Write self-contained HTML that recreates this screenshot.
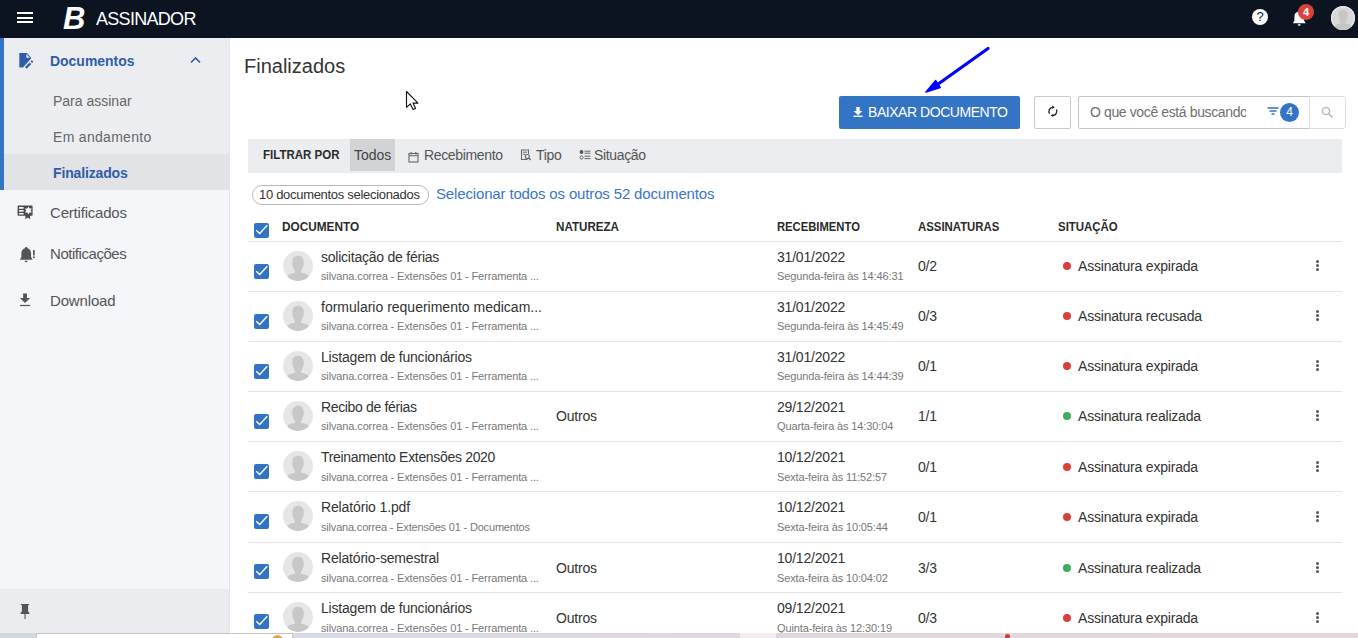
<!DOCTYPE html>
<html><head><meta charset="utf-8">
<style>
*{margin:0;padding:0;box-sizing:border-box}
html,body{width:1358px;height:638px;overflow:hidden;background:#fff;font-family:"Liberation Sans",sans-serif;color:#333}
.a{position:absolute;white-space:nowrap}
#hdr{position:absolute;left:0;top:0;width:1358px;height:38px;background:#0b1420}
#side{position:absolute;left:0;top:38px;width:230px;height:600px;background:#f5f6fa;border-right:1px solid #e3e5ea}
#docsec{position:absolute;left:0;top:0;width:229px;height:152px;background:#ecedf1;border-left:4px solid #3474c4}
#finsel{position:absolute;left:0;top:116px;width:225px;height:36px;background:#e1e3e7}
#pinsec{position:absolute;left:0;top:551px;width:229px;height:44px;background:#ebecf0}
.filt{position:absolute;left:248px;top:139px;width:1094px;height:34px;background:#ebedf0}
.hl{position:absolute;height:1px;background:#e3e4e8;left:248px;width:1094px}
.cb{position:absolute;width:15px;height:15px;background:#3373c4;border-radius:2px}
.cb svg{position:absolute;left:0;top:0}
.av{position:absolute;width:30px;height:30px;border-radius:50%;background:#e6e6e6;overflow:hidden}
.t1{font-size:14px;color:#333;letter-spacing:-0.2px}
.t2{font-size:11px;color:#777;letter-spacing:-0.13px}
.dot{position:absolute;width:8px;height:8px;border-radius:50%}
.red{background:#d9403a}.grn{background:#3fae5a}
.keb{position:absolute;width:3px}
.keb i{display:block;width:3px;height:3px;border-radius:50%;background:#555;margin-bottom:1px}
</style></head><body>
<div id="hdr">
  <div class="a" style="left:17px;top:12px;width:16px;height:2px;background:#fff"></div>
  <div class="a" style="left:17px;top:16.5px;width:16px;height:2px;background:#fff"></div>
  <div class="a" style="left:17px;top:21px;width:16px;height:2px;background:#fff"></div>
  <div class="a" style="left:63px;top:1px;font-size:31px;font-weight:bold;font-style:italic;color:#fff">B</div>
  <div class="a" style="left:96px;top:9px;font-size:18px;letter-spacing:-0.7px;color:#fff">ASSINADOR</div>
  <div class="a" style="left:1252px;top:9px;width:16px;height:16px;border-radius:50%;background:#fff;color:#0b1420;font-size:13px;text-align:center;line-height:16px">?</div>
  <svg class="a" style="left:1292px;top:9px" width="16" height="18" viewBox="0 0 16 18"><path d="M7.2 1.2C6.5 1.2 6.2 2 5.8 2.7C3.5 3.3 2.4 5.2 2.4 7.7V11.5L0.9 14.3H13.6L12.1 11.5V7.7C12.1 5.2 11 3.3 8.6 2.7C8.2 2 7.9 1.2 7.2 1.2z" fill="#fff"/><path d="M5.7 15.2H8.7A1.5 1.5 0 0 1 5.7 15.2z" fill="#fff"/></svg>
  <div class="a" style="left:1298px;top:4px;width:16px;height:16px;border-radius:50%;background:#d9433b;color:#fff;font-size:11px;font-weight:bold;text-align:center;line-height:16px">4</div>
  <div class="a" style="left:1331px;top:6px;width:24px;height:24px;border-radius:50%;background:#d8d8d8;box-shadow:inset 0 0 0 1.2px #e9e9e9;overflow:hidden"><svg width="24" height="24" viewBox="0 0 30 30" style="position:absolute;left:0;top:0"><path d="M15 4.8C11.3 4.8 9.2 7.5 9.2 11C9.2 13 9.5 15 10.2 16.5C10.8 18 11.5 19.3 12 20.5L12 21.8C9 22.3 6.2 23.2 4.5 24.5L4 30L26 30L25.5 24.5C23.8 23.2 21 22.3 18 21.8L18 20.5C18.5 19.3 19.2 18 19.8 16.5C20.5 15 20.8 13 20.8 11C20.8 7.5 18.7 4.8 15 4.8Z" fill="#c6c6c6"/></svg></div>
</div>

<div id="side">
  <div id="docsec">
    <div id="finsel"></div>
  </div>
  <div id="pinsec"></div>
</div>
<!-- sidebar content (page coords) -->
<svg class="a" style="left:18px;top:52px" width="17" height="17" viewBox="0 0 17 17"><path d="M1.3 0.9H8.8L13 5.5V6.5L5 15.6H1.3z" fill="#2f5da6"/><path d="M8.4 1.9V5.8H12z" fill="#ecedf1"/><path d="M7.9 15.9L12.4 11.2" stroke="#2f5da6" stroke-width="2.3"/><path d="M13.3 10.3L14.6 9" stroke="#2f5da6" stroke-width="2.3"/></svg>
<div class="a" style="left:50px;top:52px;font-size:15px;font-weight:bold;transform:scaleX(0.93);transform-origin:0 0;color:#2f5da6">Documentos</div>
<svg class="a" style="left:190px;top:56px" width="11" height="8" viewBox="0 0 11 8"><path d="M1 6.5L5.5 2 10 6.5" stroke="#2f5da6" stroke-width="1.6" fill="none"/></svg>
<div class="a" style="left:53px;top:93px;font-size:14px;color:#666">Para assinar</div>
<div class="a" style="left:53px;top:129px;font-size:14px;letter-spacing:0.3px;color:#666">Em andamento</div>
<div class="a" style="left:53px;top:165px;font-size:14px;font-weight:bold;letter-spacing:-0.15px;color:#2f5da6">Finalizados</div>
<svg class="a" style="left:17px;top:205px" width="16" height="15" viewBox="0 0 16 15"><rect x="0.6" y="0.6" width="15" height="10.2" rx="0.8" fill="#4a4a4a"/><path d="M2 2h4.6v1.7H2zM2 5h4.6v1.7H2zM2 7.9h4.6v1.7H2z" fill="#f5f6fa"/><path d="M11.40 1.40 L10.25 3.41 L7.94 3.40 L9.10 5.40 L7.94 7.40 L10.25 7.39 L11.40 9.40 L12.55 7.39 L14.86 7.40 L13.70 5.40 L14.86 3.40 L12.55 3.41z" fill="#f5f6fa"/><path d="M8.6 9.5L8.2 14.2 10.7 12.6 13.2 14.2 12.8 9.5z" fill="#4a4a4a"/></svg>
<div class="a" style="left:50px;top:204px;font-size:15px;letter-spacing:-0.2px;color:#555">Certificados</div>
<svg class="a" style="left:19px;top:246px" width="17" height="18" viewBox="0 0 17 18"><path d="M7.2 0.7C6.5 0.7 6.2 1.5 5.8 2.2C3.8 2.8 2.4 4.7 2.4 7.2V11L0.9 13.8H13.6L12.1 11V7.2C12.1 4.7 10.7 2.8 8.6 2.2C8.2 1.5 7.9 0.7 7.2 0.7z" fill="#555"/><path d="M5.7 14.8H8.7A1.5 1.5 0 0 1 5.7 14.8z" fill="#555"/><rect x="14" y="4" width="1.7" height="5.5" fill="#555"/><rect x="14" y="10.4" width="1.7" height="1.7" fill="#555"/></svg>
<div class="a" style="left:50px;top:245px;font-size:15px;letter-spacing:-0.45px;color:#555">Notificações</div>
<svg class="a" style="left:19px;top:293px" width="12" height="14" viewBox="0 0 12 14"><path d="M4.1 0.6H8V5H11.1L6 9.9 0.9 5H4.1z" fill="#555"/><path d="M0.9 12.5H11.2" stroke="#555" stroke-width="1.2"/></svg>
<div class="a" style="left:50px;top:292px;font-size:15px;letter-spacing:-0.15px;color:#555">Download</div>
<svg class="a" style="left:20px;top:603px" width="10" height="16" viewBox="0 0 10 16"><path d="M0.8 0.9H9.1V2.1H8.1V8.6L9.4 9.8V10.9H0.6V9.8L1.9 8.6V2.1H0.8z" fill="#555"/><path d="M5 10.9V15.9" stroke="#555" stroke-width="1.1"/></svg>

<!-- main -->
<div class="a" style="left:244px;top:55px;font-size:20px;color:#333">Finalizados</div>
<svg class="a" style="left:400px;top:85px" width="24" height="30" viewBox="0 0 24 30"><path d="M6.5 6.5V22.3L10.3 18.9 13.1 24.6 15.6 23.5 13 18.1H18z" fill="#fff" stroke="#111" stroke-width="1.1" stroke-linejoin="round"/></svg>
<svg class="a" style="left:900px;top:40px" width="100" height="60" viewBox="0 0 100 60"><path d="M88 8.5L34 47" stroke="#0000ff" stroke-width="3.2" stroke-linecap="round"/><path d="M26 52L35.7 40.6 40.2 47.5z" fill="#0000ff" stroke="#0000ff" stroke-width="1.5" stroke-linejoin="round"/></svg>
<div class="a" style="left:839px;top:96px;width:181px;height:33px;background:#3474c4;border-radius:2px"></div>
<svg class="a" style="left:853px;top:107px" width="10" height="10" viewBox="0 0 10 10"><path d="M3.3 0h3.4v4h2.6L5 8.2.7 4h2.6z" fill="#fff"/><path d="M.5 9.3h9" stroke="#fff" stroke-width="1.4"/></svg>
<div class="a" style="left:868px;top:104px;font-size:14px;letter-spacing:-0.45px;color:#fff">BAIXAR DOCUMENTO</div>
<div class="a" style="left:1034px;top:96px;width:37px;height:33px;border:1px solid #c9cbd0;border-radius:2px;background:#fff"></div>
<svg class="a" style="left:1046px;top:105px" width="14" height="14" viewBox="0 0 14 14"><path d="M6.6 2.3A4.1 4.1 0 0 0 3.6 8.6" stroke="#222" stroke-width="1.3" fill="none"/><path d="M10.4 4.6A4.1 4.1 0 0 1 7.2 10.4" stroke="#222" stroke-width="1.3" fill="none"/><path d="M6.2 0.6L8.9 2.3 6.2 4z" fill="#222"/><path d="M7.4 8.7L4.7 10.4 7.4 12.1z" fill="#222"/></svg>
<div class="a" style="left:1078px;top:96px;width:232px;height:33px;border:1px solid #c2c4c8;border-radius:2px 0 0 2px;background:#fff"></div>
<div class="a" style="left:1090px;top:104px;width:156px;overflow:hidden;font-size:14px;letter-spacing:-0.38px;color:#6f6f6f">O que você está buscando?</div>
<svg class="a" style="left:1267px;top:107px" width="12" height="9" viewBox="0 0 12 9"><path d="M0.5 1h11M2.5 4h7M4.5 7h3" stroke="#3474c4" stroke-width="1.4"/></svg>
<div class="a" style="left:1280px;top:103px;width:19px;height:19px;border-radius:50%;background:#3474c4;color:#fff;font-size:12px;text-align:center;line-height:19px">4</div>
<div class="a" style="left:1309px;top:96px;width:37px;height:33px;border:1px solid #dcdee2;border-radius:0 3px 3px 0;background:#fff"></div>
<svg class="a" style="left:1321px;top:106px" width="13" height="13" viewBox="0 0 13 13"><circle cx="5" cy="5" r="3.6" stroke="#bbb" stroke-width="1.5" fill="none"/><path d="M7.8 7.8l3.6 3.6" stroke="#bbb" stroke-width="1.8"/></svg>

<div class="filt"></div>
<div class="a" style="left:350px;top:139px;width:45px;height:32px;background:#d2d3d6"></div>
<div class="a" style="left:263px;top:147px;font-size:13px;font-weight:bold;transform:scaleX(0.885);transform-origin:0 0;color:#2b2b2b">FILTRAR POR</div>
<div class="a" style="left:354px;top:147px;font-size:14px;color:#444">Todos</div>
<svg class="a" style="left:408px;top:151px" width="11" height="12" viewBox="0 0 11 12"><rect x="1" y="2.5" width="9" height="8.5" stroke="#666" stroke-width="1.1" fill="none"/><path d="M1 4.8h9M3.2 1v2.5M7.8 1v2.5" stroke="#666" stroke-width="1.1"/></svg>
<div class="a" style="left:424px;top:147px;font-size:14px;letter-spacing:-0.35px;color:#555">Recebimento</div>
<svg class="a" style="left:520px;top:149px" width="12" height="12" viewBox="0 0 12 12"><path d="M7.5 10.5H1.5V1h7v4" stroke="#666" stroke-width="1.1" fill="none"/><path d="M3 3.2h4M3 5.3h2.5" stroke="#666" stroke-width="1"/><circle cx="7.3" cy="7.5" r="2" stroke="#666" stroke-width="1.1" fill="none"/><path d="M8.7 9l2 2" stroke="#666" stroke-width="1.2"/></svg>
<div class="a" style="left:536px;top:147px;font-size:14px;letter-spacing:-0.35px;color:#555">Tipo</div>
<svg class="a" style="left:579px;top:149px" width="12" height="12" viewBox="0 0 12 12"><circle cx="2.5" cy="3" r="1.9" fill="#555"/><circle cx="2.5" cy="8.5" r="1.6" stroke="#666" stroke-width="1" fill="none"/><path d="M5.5 2.2h6M5.5 4.2h6M5.5 7.2h6M5.5 9.6h6" stroke="#666" stroke-width="1"/></svg>
<div class="a" style="left:594px;top:147px;font-size:14px;letter-spacing:-0.35px;color:#555">Situação</div>

<div class="a" style="left:252px;top:185px;width:177px;height:20px;border:1px solid #b8b8b8;border-radius:10px"></div>
<div class="a" style="left:259px;top:187px;font-size:13px;letter-spacing:-0.3px;color:#333">10 documentos selecionados</div>
<div class="a" style="left:436px;top:185px;font-size:15px;letter-spacing:-0.15px;color:#3a77c7">Selecionar todos os outros 52 documentos</div>

<div class="cb" style="left:254px;top:223px"><svg width="15" height="15" viewBox="0 0 15 15"><path d="M2.2 7.3l3.5 3.2 7.6-8.2" stroke="#fff" stroke-width="1.4" fill="none"/></svg></div>
<div class="a" style="left:282px;top:219px;font-size:13px;font-weight:bold;transform:scaleX(0.907);transform-origin:0 0;color:#2b2b2b">DOCUMENTO</div>
<div class="a" style="left:556px;top:219px;font-size:13px;font-weight:bold;transform:scaleX(0.893);transform-origin:0 0;color:#2b2b2b">NATUREZA</div>
<div class="a" style="left:777px;top:219px;font-size:13px;font-weight:bold;transform:scaleX(0.865);transform-origin:0 0;color:#2b2b2b">RECEBIMENTO</div>
<div class="a" style="left:918px;top:219px;font-size:13px;font-weight:bold;transform:scaleX(0.875);transform-origin:0 0;color:#2b2b2b">ASSINATURAS</div>
<div class="a" style="left:1058px;top:219px;font-size:13px;font-weight:bold;transform:scaleX(0.880);transform-origin:0 0;color:#2b2b2b">SITUAÇÃO</div>
<div class="hl" style="top:241px"></div>
<div class="cb" style="left:254px;top:264px"><svg width="15" height="15" viewBox="0 0 15 15"><path d="M2.2 7.3l3.5 3.2 7.6-8.2" stroke="#fff" stroke-width="1.4" fill="none"/></svg></div>
<div class="av" style="left:283px;top:251px"><svg width="30" height="30" viewBox="0 0 30 30"><path d="M15 4.8C11.3 4.8 9.2 7.5 9.2 11C9.2 13 9.5 15 10.2 16.5C10.8 18 11.5 19.3 12 20.5L12 21.8C9 22.3 6.2 23.2 4.5 24.5L4 30L26 30L25.5 24.5C23.8 23.2 21 22.3 18 21.8L18 20.5C18.5 19.3 19.2 18 19.8 16.5C20.5 15 20.8 13 20.8 11C20.8 7.5 18.7 4.8 15 4.8Z" fill="#c8c8c8"/></svg></div>
<div class="a t1" style="left:321px;top:249px;letter-spacing:-0.23px">solicitação de férias</div>
<div class="a t2" style="left:321px;top:270px">silvana.correa - Extensões 01 - Ferramenta ...</div>

<div class="a t1" style="left:777px;top:249px">31/01/2022</div>
<div class="a t2" style="left:777px;top:270px">Segunda-feira às 14:46:31</div>
<div class="a t1" style="left:918px;top:258px">0/2</div>
<div class="dot red" style="left:1063px;top:262px"></div>
<div class="a t1" style="left:1078px;top:258px">Assinatura expirada</div>
<div class="keb" style="left:1316px;top:260px"><i></i><i></i><i></i></div>
<div class="hl" style="top:291px"></div>
<div class="cb" style="left:254px;top:314px"><svg width="15" height="15" viewBox="0 0 15 15"><path d="M2.2 7.3l3.5 3.2 7.6-8.2" stroke="#fff" stroke-width="1.4" fill="none"/></svg></div>
<div class="av" style="left:283px;top:301px"><svg width="30" height="30" viewBox="0 0 30 30"><path d="M15 4.8C11.3 4.8 9.2 7.5 9.2 11C9.2 13 9.5 15 10.2 16.5C10.8 18 11.5 19.3 12 20.5L12 21.8C9 22.3 6.2 23.2 4.5 24.5L4 30L26 30L25.5 24.5C23.8 23.2 21 22.3 18 21.8L18 20.5C18.5 19.3 19.2 18 19.8 16.5C20.5 15 20.8 13 20.8 11C20.8 7.5 18.7 4.8 15 4.8Z" fill="#c8c8c8"/></svg></div>
<div class="a t1" style="left:321px;top:299px;letter-spacing:0.0px">formulario requerimento medicam...</div>
<div class="a t2" style="left:321px;top:320px">silvana.correa - Extensões 01 - Ferramenta ...</div>

<div class="a t1" style="left:777px;top:299px">31/01/2022</div>
<div class="a t2" style="left:777px;top:320px">Segunda-feira às 14:45:49</div>
<div class="a t1" style="left:918px;top:308px">0/3</div>
<div class="dot red" style="left:1063px;top:312px"></div>
<div class="a t1" style="left:1078px;top:308px">Assinatura recusada</div>
<div class="keb" style="left:1316px;top:310px"><i></i><i></i><i></i></div>
<div class="hl" style="top:341px"></div>
<div class="cb" style="left:254px;top:364px"><svg width="15" height="15" viewBox="0 0 15 15"><path d="M2.2 7.3l3.5 3.2 7.6-8.2" stroke="#fff" stroke-width="1.4" fill="none"/></svg></div>
<div class="av" style="left:283px;top:351px"><svg width="30" height="30" viewBox="0 0 30 30"><path d="M15 4.8C11.3 4.8 9.2 7.5 9.2 11C9.2 13 9.5 15 10.2 16.5C10.8 18 11.5 19.3 12 20.5L12 21.8C9 22.3 6.2 23.2 4.5 24.5L4 30L26 30L25.5 24.5C23.8 23.2 21 22.3 18 21.8L18 20.5C18.5 19.3 19.2 18 19.8 16.5C20.5 15 20.8 13 20.8 11C20.8 7.5 18.7 4.8 15 4.8Z" fill="#c8c8c8"/></svg></div>
<div class="a t1" style="left:321px;top:349px;letter-spacing:-0.2px">Listagem de funcionários</div>
<div class="a t2" style="left:321px;top:370px">silvana.correa - Extensões 01 - Ferramenta ...</div>

<div class="a t1" style="left:777px;top:349px">31/01/2022</div>
<div class="a t2" style="left:777px;top:370px">Segunda-feira às 14:44:39</div>
<div class="a t1" style="left:918px;top:358px">0/1</div>
<div class="dot red" style="left:1063px;top:362px"></div>
<div class="a t1" style="left:1078px;top:358px">Assinatura expirada</div>
<div class="keb" style="left:1316px;top:360px"><i></i><i></i><i></i></div>
<div class="hl" style="top:391px"></div>
<div class="cb" style="left:254px;top:414px"><svg width="15" height="15" viewBox="0 0 15 15"><path d="M2.2 7.3l3.5 3.2 7.6-8.2" stroke="#fff" stroke-width="1.4" fill="none"/></svg></div>
<div class="av" style="left:283px;top:401px"><svg width="30" height="30" viewBox="0 0 30 30"><path d="M15 4.8C11.3 4.8 9.2 7.5 9.2 11C9.2 13 9.5 15 10.2 16.5C10.8 18 11.5 19.3 12 20.5L12 21.8C9 22.3 6.2 23.2 4.5 24.5L4 30L26 30L25.5 24.5C23.8 23.2 21 22.3 18 21.8L18 20.5C18.5 19.3 19.2 18 19.8 16.5C20.5 15 20.8 13 20.8 11C20.8 7.5 18.7 4.8 15 4.8Z" fill="#c8c8c8"/></svg></div>
<div class="a t1" style="left:321px;top:399px;letter-spacing:-0.35px">Recibo de férias</div>
<div class="a t2" style="left:321px;top:420px">silvana.correa - Extensões 01 - Ferramenta ...</div>
<div class="a t1" style="left:556px;top:408px">Outros</div>
<div class="a t1" style="left:777px;top:399px">29/12/2021</div>
<div class="a t2" style="left:777px;top:420px">Quarta-feira às 14:30:04</div>
<div class="a t1" style="left:918px;top:408px">1/1</div>
<div class="dot grn" style="left:1063px;top:412px"></div>
<div class="a t1" style="left:1078px;top:408px">Assinatura realizada</div>
<div class="keb" style="left:1316px;top:410px"><i></i><i></i><i></i></div>
<div class="hl" style="top:441px"></div>
<div class="cb" style="left:254px;top:464px"><svg width="15" height="15" viewBox="0 0 15 15"><path d="M2.2 7.3l3.5 3.2 7.6-8.2" stroke="#fff" stroke-width="1.4" fill="none"/></svg></div>
<div class="av" style="left:283px;top:451px"><svg width="30" height="30" viewBox="0 0 30 30"><path d="M15 4.8C11.3 4.8 9.2 7.5 9.2 11C9.2 13 9.5 15 10.2 16.5C10.8 18 11.5 19.3 12 20.5L12 21.8C9 22.3 6.2 23.2 4.5 24.5L4 30L26 30L25.5 24.5C23.8 23.2 21 22.3 18 21.8L18 20.5C18.5 19.3 19.2 18 19.8 16.5C20.5 15 20.8 13 20.8 11C20.8 7.5 18.7 4.8 15 4.8Z" fill="#c8c8c8"/></svg></div>
<div class="a t1" style="left:321px;top:449px;letter-spacing:-0.32px">Treinamento Extensões 2020</div>
<div class="a t2" style="left:321px;top:471px">silvana.correa - Extensões 01 - Ferramenta ...</div>

<div class="a t1" style="left:777px;top:449px">10/12/2021</div>
<div class="a t2" style="left:777px;top:471px">Sexta-feira às 11:52:57</div>
<div class="a t1" style="left:918px;top:459px">0/1</div>
<div class="dot red" style="left:1063px;top:463px"></div>
<div class="a t1" style="left:1078px;top:459px">Assinatura expirada</div>
<div class="keb" style="left:1316px;top:461px"><i></i><i></i><i></i></div>
<div class="hl" style="top:491px"></div>
<div class="cb" style="left:254px;top:514px"><svg width="15" height="15" viewBox="0 0 15 15"><path d="M2.2 7.3l3.5 3.2 7.6-8.2" stroke="#fff" stroke-width="1.4" fill="none"/></svg></div>
<div class="av" style="left:283px;top:501px"><svg width="30" height="30" viewBox="0 0 30 30"><path d="M15 4.8C11.3 4.8 9.2 7.5 9.2 11C9.2 13 9.5 15 10.2 16.5C10.8 18 11.5 19.3 12 20.5L12 21.8C9 22.3 6.2 23.2 4.5 24.5L4 30L26 30L25.5 24.5C23.8 23.2 21 22.3 18 21.8L18 20.5C18.5 19.3 19.2 18 19.8 16.5C20.5 15 20.8 13 20.8 11C20.8 7.5 18.7 4.8 15 4.8Z" fill="#c8c8c8"/></svg></div>
<div class="a t1" style="left:321px;top:499px;letter-spacing:-0.14px">Relatório 1.pdf</div>
<div class="a t2" style="left:321px;top:521px" ><span style="letter-spacing:-0.18px">silvana.correa - Extensões 01 - Documentos</span></div>

<div class="a t1" style="left:777px;top:499px">10/12/2021</div>
<div class="a t2" style="left:777px;top:521px">Sexta-feira às 10:05:44</div>
<div class="a t1" style="left:918px;top:509px">0/1</div>
<div class="dot red" style="left:1063px;top:513px"></div>
<div class="a t1" style="left:1078px;top:509px">Assinatura expirada</div>
<div class="keb" style="left:1316px;top:511px"><i></i><i></i><i></i></div>
<div class="hl" style="top:542px"></div>
<div class="cb" style="left:254px;top:564px"><svg width="15" height="15" viewBox="0 0 15 15"><path d="M2.2 7.3l3.5 3.2 7.6-8.2" stroke="#fff" stroke-width="1.4" fill="none"/></svg></div>
<div class="av" style="left:283px;top:552px"><svg width="30" height="30" viewBox="0 0 30 30"><path d="M15 4.8C11.3 4.8 9.2 7.5 9.2 11C9.2 13 9.5 15 10.2 16.5C10.8 18 11.5 19.3 12 20.5L12 21.8C9 22.3 6.2 23.2 4.5 24.5L4 30L26 30L25.5 24.5C23.8 23.2 21 22.3 18 21.8L18 20.5C18.5 19.3 19.2 18 19.8 16.5C20.5 15 20.8 13 20.8 11C20.8 7.5 18.7 4.8 15 4.8Z" fill="#c8c8c8"/></svg></div>
<div class="a t1" style="left:321px;top:550px;letter-spacing:-0.18px">Relatório-semestral</div>
<div class="a t2" style="left:321px;top:572px">silvana.correa - Extensões 01 - Ferramenta ...</div>
<div class="a t1" style="left:556px;top:560px">Outros</div>
<div class="a t1" style="left:777px;top:550px">10/12/2021</div>
<div class="a t2" style="left:777px;top:572px">Sexta-feira às 10:04:02</div>
<div class="a t1" style="left:918px;top:560px">3/3</div>
<div class="dot grn" style="left:1063px;top:564px"></div>
<div class="a t1" style="left:1078px;top:560px">Assinatura realizada</div>
<div class="keb" style="left:1316px;top:562px"><i></i><i></i><i></i></div>
<div class="hl" style="top:592px"></div>
<div class="cb" style="left:254px;top:614px"><svg width="15" height="15" viewBox="0 0 15 15"><path d="M2.2 7.3l3.5 3.2 7.6-8.2" stroke="#fff" stroke-width="1.4" fill="none"/></svg></div>
<div class="av" style="left:283px;top:602px"><svg width="30" height="30" viewBox="0 0 30 30"><path d="M15 4.8C11.3 4.8 9.2 7.5 9.2 11C9.2 13 9.5 15 10.2 16.5C10.8 18 11.5 19.3 12 20.5L12 21.8C9 22.3 6.2 23.2 4.5 24.5L4 30L26 30L25.5 24.5C23.8 23.2 21 22.3 18 21.8L18 20.5C18.5 19.3 19.2 18 19.8 16.5C20.5 15 20.8 13 20.8 11C20.8 7.5 18.7 4.8 15 4.8Z" fill="#c8c8c8"/></svg></div>
<div class="a t1" style="left:321px;top:600px;letter-spacing:-0.2px">Listagem de funcionários</div>
<div class="a t2" style="left:321px;top:622px">silvana.correa - Extensões 01 - Ferramenta ...</div>
<div class="a t1" style="left:556px;top:610px">Outros</div>
<div class="a t1" style="left:777px;top:600px">09/12/2021</div>
<div class="a t2" style="left:777px;top:622px">Quinta-feira às 12:30:19</div>
<div class="a t1" style="left:918px;top:610px">0/3</div>
<div class="dot red" style="left:1063px;top:614px"></div>
<div class="a t1" style="left:1078px;top:610px">Assinatura expirada</div>
<div class="keb" style="left:1316px;top:612px"><i></i><i></i><i></i></div>
<div class="hl" style="top:642px"></div>

<!-- taskbar strip -->
<div class="a" style="left:0;top:633px;width:1358px;height:5px;background:linear-gradient(90deg,#d3d9e1 0,#d3d9e1 36px,#d8dae6 300px,#e0d8de 740px,#e3d6dc 1358px)"></div>
<div class="a" style="left:740px;top:633px;width:36px;height:5px;background:#f2eef0"></div>
<div class="a" style="left:36px;top:633px;width:257px;height:5px;background:#fff;border:1px solid #c4c4c4;border-bottom:none"></div>
<div class="a" style="left:272px;top:635px;width:11px;height:11px;border-radius:50%;background:#e3a642"></div>
<div class="a" style="left:1005px;top:634px;width:5px;height:5px;border-radius:50%;background:#d23a3a"></div>

</body></html>
